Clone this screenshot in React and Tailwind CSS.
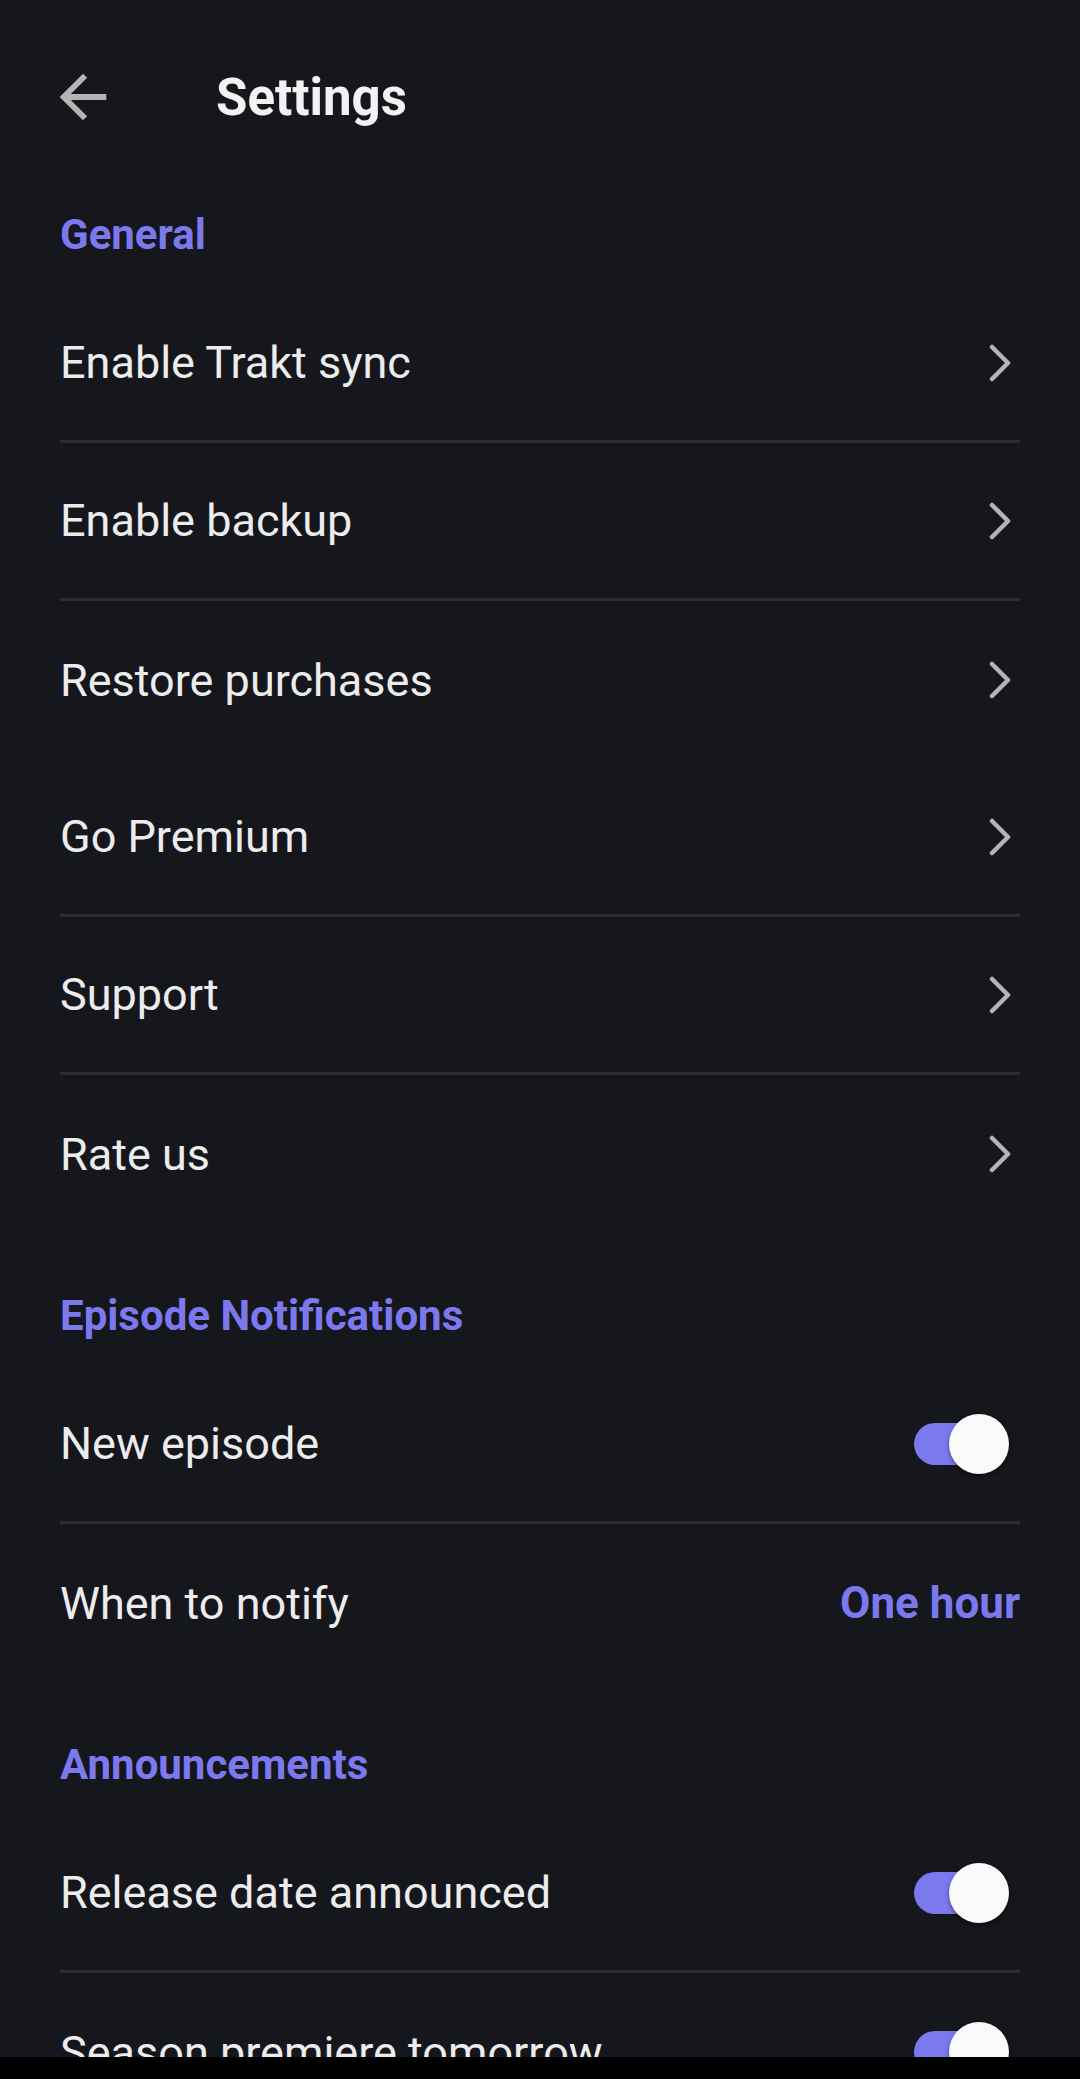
import React from 'react';

const Chevron = () => (
  <svg width="24" height="38" viewBox="0 0 24 38" className="mr-[8px] shrink-0">
    <polyline points="4,3 20,19 4,35" fill="none" stroke="#b4b4b4" strokeWidth="4.5" strokeLinecap="round" strokeLinejoin="round" />
  </svg>
);

const Toggle = () => (
  <div className="relative mr-[11px] h-[60px] w-[95px] shrink-0 flex items-center">
    <div className="h-[42px] w-[86px] rounded-full bg-[#7c79ef]" />
    <div className="absolute right-0 top-0 h-[60px] w-[60px] rounded-full bg-[#fafafa] shadow-[0_2px_4px_rgba(0,0,0,0.45)]" />
  </div>
);

const Row = ({ label, divider, children }) => (
  <div className={`h-[158px] flex items-center justify-between ${divider ? 'border-b-[3px] border-[#2b2c32]' : ''}`}>
    <span className="text-[45px] text-[#ececec] leading-none">{label}</span>
    {children}
  </div>
);

const SectionTitle = ({ title, first }) => (
  <div className={`h-[100px] flex items-center ${first ? '' : 'mt-[33px]'}`}>
    <span className="text-[42px] font-bold text-[#7c79ef] leading-none">{title}</span>
  </div>
);

export default function App() {
  return (
    <div className="h-[2079px] overflow-hidden bg-[#16171c] font-['Roboto',sans-serif]">
      {/* header */}
      <div className="h-[185px] pt-[9px] pl-[48px] flex items-center">
        <svg width="70" height="70" viewBox="0 0 24 24" className="shrink-0">
          <path d="M20 11H7.83l5.59-5.59L12 4l-8 8 8 8 1.41-1.41L7.83 13H20v-2z" fill="#b4b4b4" />
        </svg>
        <h1 className="ml-[98px] text-[51px] font-bold text-[#f2f2f2] leading-none">Settings</h1>
      </div>

      <div className="px-[60px]">
        <SectionTitle title="General" first />
        <Row label="Enable Trakt sync" divider><Chevron /></Row>
        <Row label="Enable backup" divider><Chevron /></Row>
        <Row label="Restore purchases"><Chevron /></Row>
        <Row label="Go Premium" divider><Chevron /></Row>
        <Row label="Support" divider><Chevron /></Row>
        <Row label="Rate us"><Chevron /></Row>

        <SectionTitle title="Episode Notifications" />
        <Row label="New episode" divider><Toggle /></Row>
        <Row label="When to notify">
          <span className="text-[44px] font-bold text-[#7c79ef] leading-none">One hour</span>
        </Row>

        <SectionTitle title="Announcements" />
        <Row label="Release date announced" divider><Toggle /></Row>
        <Row label="Season premiere tomorrow"><Toggle /></Row>
      </div>

      {/* system nav bar */}
      <div className="fixed bottom-0 left-0 right-0 h-[22px] bg-black" />
    </div>
  );
}
